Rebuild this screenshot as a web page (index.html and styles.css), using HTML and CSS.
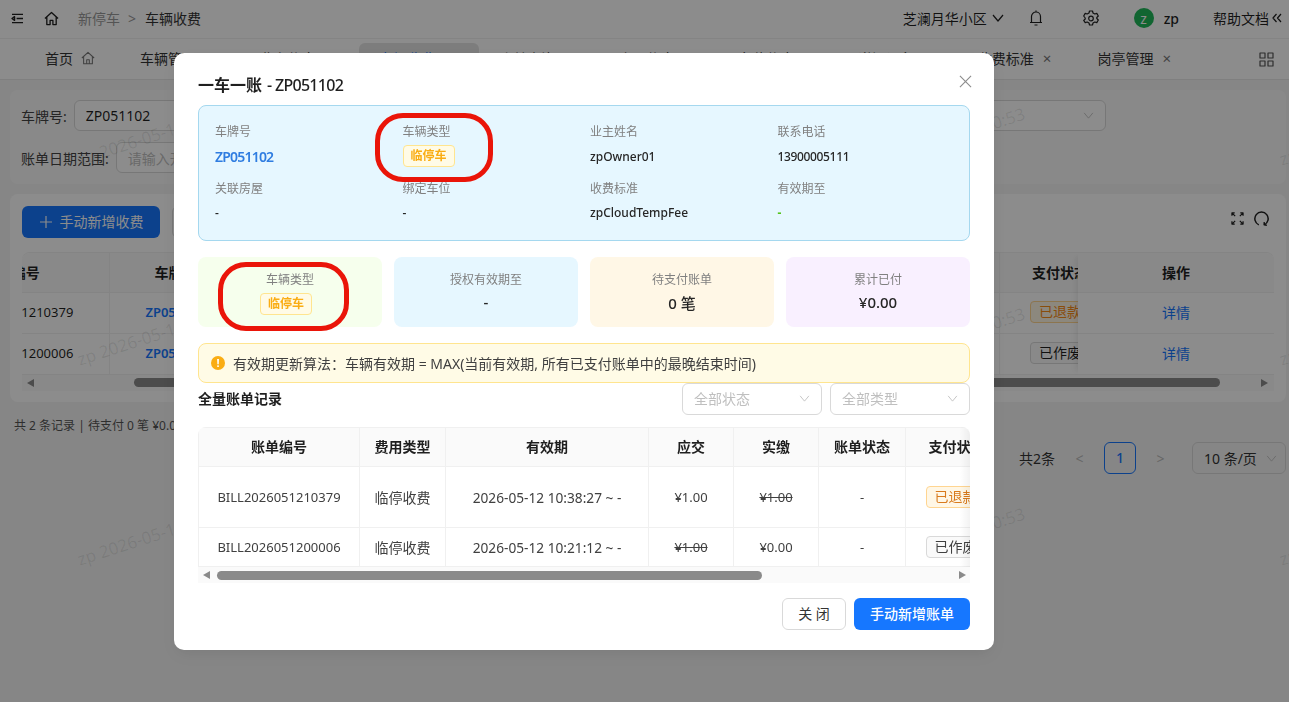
FILE: index.html
```html
<!DOCTYPE html>
<html lang="zh">
<head>
  <meta charset="utf-8">
  <title>车辆收费</title>
  <link rel="stylesheet" href="styles.css">
</head>
<body>
  <header class="topbar">
    <svg class="ico menu-ico" viewBox="0 0 14 12"><path d="M1 1.500h12M6 6h7M1 10.500h12M3.800 4 1 6l2.800 2z"/></svg>
    <svg class="ico home-ico" viewBox="0 0 16 16"><path d="M1 8 8 1.500 15 8M3 6.500V14.500h3.500V10h3v4.500H13V6.500"/></svg>
    <span class="crumb">新停车</span>
    <span class="crumb-sep">&gt;</span>
    <span class="crumb-now">车辆收费</span>
    <div class="topbar-right">
      <span class="community">芝澜月华小区</span>
      <svg class="ico chevron" viewBox="0 0 12 8"><path d="m1 1 5 6 5-6"/></svg>
      <svg class="ico bell" viewBox="0 0 14 16"><path d="M2.500 12.500V6.500a4.500 4.500 0 0 1 9 0v6M1 12.500h12M5.500 15h3M7 .5V2"/></svg>
      <svg class="ico gear" viewBox="0 0 16 16"><path d="M6.500 1h3l.5 2 1.800 1 2-.6 1.500 2.600-1.500 1.500v1l1.500 1.500-1.500 2.600-2-.6-1.800 1-.5 2h-3l-.5-2-1.800-1-2 .6L.700 10.500l1.500-1.500V8L.700 6l1.500-2.600 2 .6L6 3z"/><circle cx="8" cy="8.500" r="2.300"/></svg>
      <span class="avatar">z</span>
      <span class="user">zp</span>
      <span class="help">帮助文档</span>
      <svg class="ico collapse" viewBox="0 0 10 10"><path d="M4.500 1 1 5l3.500 4M9 1 5.500 5 9 9"/></svg>
    </div>
  </header>

  <nav class="tabs">
    <div class="tab tab-first">首页
      <svg class="ico tab-home" viewBox="0 0 16 16"><path d="M1 8 8 1.500 15 8M3 6.500V14.500h10V6.500M6.500 14.500V10h3v4.500"/></svg>
    </div>
    <div class="tab">车辆管理<span class="tab-x">×</span></div>
    <div class="tab">业主信息<span class="tab-x">×</span></div>
    <div class="tab tab-active">车辆收费<span class="tab-x">×</span></div>
    <div class="tab">账单查询<span class="tab-x">×</span></div>
    <div class="tab">房屋信息<span class="tab-x">×</span></div>
    <div class="tab">车位信息<span class="tab-x">×</span></div>
    <div class="tab">道闸设备<span class="tab-x">×</span></div>
    <div class="tab">收费标准<span class="tab-x">×</span></div>
    <div class="tab">岗亭管理<span class="tab-x">×</span></div>
    <svg class="ico tab-grid" viewBox="0 0 15 15"><path d="M1 1h5v5H1zM9 1h5v5H9zM1 9h5v5H1zM9 9h5v5H9z"/></svg>
  </nav>

  <main class="content">
    <section class="card search-card">
      <div class="search-row">
        <label class="search-label">车牌号:</label>
        <div class="input plate-input">ZP051102</div>
        <div class="input status-input">
          <span class="placeholder">全部状态</span>
          <svg class="ico chevron-sm" viewBox="0 0 12 8"><path d="m1 1 5 6 5-6"/></svg>
        </div>
      </div>
      <div class="search-row">
        <label class="search-label">账单日期范围:</label>
        <div class="input date-input"><span class="placeholder">请输入开始日期</span></div>
      </div>
    </section>

    <section class="card list-card">
      <div class="list-tools">
        <button class="btn-add">
          <svg class="plus" viewBox="0 0 12 12"><path d="M6 0v12M0 6h12"/></svg>手动新增收费
        </button>
        <button class="btn-export">导出</button>
        <svg class="ico tool-expand" viewBox="0 0 14 14"><path d="M1 4V1h3M1 1l3.500 3.500M13 4V1h-3M13 1 9.500 4.500M1 10v3h3M1 13l3.500-3.500M13 10v3h-3M13 13 9.500 9.500"/></svg>
        <svg class="ico tool-reload" viewBox="0 0 14 14"><path d="M4.500 12.900A6.200 6.200 0 1 1 9.500 12.900M9.600 10.400l-.1 2.500 2.500.4"/></svg>
      </div>
      <div class="list-wrap">
        <div class="list-scroll">
          <table class="list-table">
            <colgroup><col class="c-no"><col class="c-plate"><col class="c-rest"><col class="c-pay"></colgroup>
            <thead><tr><th>账单编号</th><th>车牌号</th><th>费用类型</th><th>支付状态</th></tr></thead>
            <tbody>
              <tr><td class="num">BILL2026051210379</td><td class="num plate-link">ZP051102</td><td>临停收费</td><td><span class="tag tag-refund">已退款</span></td></tr>
              <tr><td class="num">BILL2026051200006</td><td class="num plate-link">ZP051102</td><td>临停收费</td><td><span class="tag tag-void">已作废</span></td></tr>
            </tbody>
          </table>
        </div>
        <table class="list-table fixed-col">
          <thead><tr><th>操作</th></tr></thead>
          <tbody>
            <tr><td class="detail-link">详情</td></tr>
            <tr><td class="detail-link">详情</td></tr>
          </tbody>
        </table>
      </div>
      <div class="hscroll list-hscroll">
        <span class="arrow-left"></span>
        <span class="track"><span class="thumb"></span></span>
        <span class="arrow-right"></span>
      </div>
    </section>

    <div class="list-foot">
      <span class="foot-summary">共 2 条记录 | 待支付 0 笔 ¥0.00</span>
      <div class="pager">
        <span>共2条</span>
        <span class="pager-arrow">&lt;</span>
        <span class="pager-num">1</span>
        <span class="pager-arrow">&gt;</span>
        <span class="pager-size">10 条/页
          <svg class="ico chevron-sm" viewBox="0 0 12 8"><path d="m1 1 5 6 5-6"/></svg>
        </span>
      </div>
    </div>
  </main>

  <div class="watermarks">
    <span>zp 2026-05-12 10:20:53</span><span>zp 2026-05-12 10:20:53</span><span>zp 2026-05-12 10:20:53</span><span>zp 2026-05-12 10:20:53</span>
    <span>zp 2026-05-12 10:20:53</span><span>zp 2026-05-12 10:20:53</span><span>zp 2026-05-12 10:20:53</span><span>zp 2026-05-12 10:20:53</span>
    <span>zp 2026-05-12 10:20:53</span><span>zp 2026-05-12 10:20:53</span><span>zp 2026-05-12 10:20:53</span><span>zp 2026-05-12 10:20:53</span>
  </div>

  <div class="overlay">
    <div class="modal">
      <div class="modal-head">
        <h2 class="modal-title">一车一账<span class="modal-plate">- ZP051102</span></h2>
        <svg class="modal-close" viewBox="0 0 14 14"><path d="m1 1 12 12M13 1 1 13"/></svg>
      </div>

      <div class="info-box">
        <div class="info-item"><div class="info-label">车牌号</div><div class="info-value info-plate">ZP051102</div></div>
        <div class="info-item"><div class="info-label">车辆类型</div><div class="info-value"><span class="tag-temp">临停车</span></div></div>
        <div class="info-item"><div class="info-label">业主姓名</div><div class="info-value">zpOwner01</div></div>
        <div class="info-item"><div class="info-label">联系电话</div><div class="info-value info-phone">13900005111</div></div>
        <div class="info-item"><div class="info-label">关联房屋</div><div class="info-value">-</div></div>
        <div class="info-item"><div class="info-label">绑定车位</div><div class="info-value">-</div></div>
        <div class="info-item"><div class="info-label">收费标准</div><div class="info-value">zpCloudTempFee</div></div>
        <div class="info-item"><div class="info-label">有效期至</div><div class="info-value info-green">-</div></div>
      </div>

      <div class="stats">
        <div class="stat stat-green"><div class="stat-label">车辆类型</div><div class="stat-value"><span class="tag-temp stat-tag">临停车</span></div></div>
        <div class="stat stat-blue"><div class="stat-label">授权有效期至</div><div class="stat-value">-</div></div>
        <div class="stat stat-orange"><div class="stat-label">待支付账单</div><div class="stat-value">0 笔</div></div>
        <div class="stat stat-purple"><div class="stat-label">累计已付</div><div class="stat-value">¥0.00</div></div>
      </div>

      <div class="alert">
        <span class="alert-icon">!</span>
        有效期更新算法：车辆有效期 = MAX(当前有效期, 所有已支付账单中的最晚结束时间)
      </div>

      <div class="bill-head">
        <span class="bill-title">全量账单记录</span>
        <div class="bill-filters">
          <div class="filter"><span>全部状态</span><svg class="ico chevron-sm" viewBox="0 0 12 8"><path d="m1 1 5 6 5-6"/></svg></div>
          <div class="filter"><span>全部类型</span><svg class="ico chevron-sm" viewBox="0 0 12 8"><path d="m1 1 5 6 5-6"/></svg></div>
        </div>
      </div>

      <div class="bill-wrap">
        <table class="bill-table">
          <colgroup>
            <col class="b1"><col class="b2"><col class="b3"><col class="b4"><col class="b5"><col class="b6"><col class="b7">
          </colgroup>
          <thead>
            <tr><th>账单编号</th><th>费用类型</th><th>有效期</th><th>应交</th><th>实缴</th><th>账单状态</th><th>支付状态</th></tr>
          </thead>
          <tbody>
            <tr class="row-tall">
              <td>BILL2026051210379</td><td class="cn">临停收费</td><td class="date">2026-05-12 10:38:27 ~ -</td><td>¥1.00</td><td><s>¥1.00</s></td><td>-</td>
              <td><span class="bill-tag refund">已退款</span></td>
            </tr>
            <tr class="row-short">
              <td>BILL2026051200006</td><td class="cn">临停收费</td><td class="date">2026-05-12 10:21:12 ~ -</td><td><s>¥1.00</s></td><td>¥0.00</td><td>-</td>
              <td><span class="bill-tag void">已作废</span></td>
            </tr>
          </tbody>
        </table>
        <div class="hscroll bill-hscroll">
          <span class="arrow-left"></span>
          <span class="track"><span class="thumb"></span></span>
          <span class="arrow-right"></span>
        </div>
      </div>

      <div class="modal-foot">
        <button class="btn-close">关 闭</button>
        <button class="btn-primary">手动新增账单</button>
      </div>

      <span class="ring ring-info"></span>
      <span class="ring ring-stat"></span>
    </div>
  </div>
</body>
</html>
```

FILE: styles.css
```css
* {
  box-sizing: border-box;
}
html, body {
  height: 100%;
}
body {
  margin: 0;
  overflow: hidden;
  background: #f5f5f5;
  color: rgba(0, 0, 0, 0.88);
  font-family: "Noto Sans", "Noto Sans CJK SC", sans-serif;
  font-size: 14px;
}
.ico {
  flex: none;
  fill: none;
  stroke: currentColor;
  stroke-width: 1.2;
  stroke-linejoin: round;
}

/* top bar */
.topbar {
  display: flex;
  align-items: center;
  height: 39px;
  padding: 0 7px 2px 11px;
  background: #fff;
  border-bottom: 1px solid #f0f0f0;
}
.menu-ico {
  width: 13px;
  height: 11px;
  stroke-width: 1.500;
}
.home-ico {
  width: 15px;
  height: 15px;
  margin-left: 20px;
  stroke-width: 1.400;
}
.crumb {
  margin-left: 19px;
  color: #999;
}
.crumb-sep {
  margin: 0 9px 0 8px;
  color: #999;
}
.crumb-now {
  color: #333;
}
.topbar-right {
  display: flex;
  align-items: center;
  margin-left: auto;
}
.chevron {
  width: 12px;
  height: 8px;
  margin-left: 5px;
}
.bell {
  width: 14px;
  height: 16px;
  margin-left: 25px;
}
.gear {
  width: 16px;
  height: 16px;
  margin-left: 40px;
}
.avatar {
  width: 20px;
  height: 20px;
  margin-left: 35px;
  border-radius: 50%;
  background: #1fb85a;
  color: #fff;
  font-size: 14px;
  line-height: 22px;
  text-align: center;
}
.user {
  margin-left: 10px;
  font-weight: 500;
}
.help {
  margin-left: 34px;
}
.collapse {
  width: 10px;
  height: 10px;
  margin-left: 3px;
}

/* tabs */
.tabs {
  display: flex;
  align-items: center;
  height: 41px;
  padding: 0 15px 0 25px;
  background: #fff;
  border-bottom: 1px solid #e8e8e8;
}
.tab {
  display: flex;
  align-items: center;
  width: 119.700px;
  height: 37px;
  margin-top: 4px;
  padding: 0 0 7px 20px;
  color: #333;
}
.tab-first {
  width: 95px;
}
.tab-home {
  width: 14px;
  height: 14px;
  margin-left: 8px;
  color: #777;
}
.tab-active {
  border-radius: 6px 6px 0 0;
  background: #e4e4e4;
  color: #1677ff;
}
.tab-x {
  margin-left: 9px;
  color: #777;
  font-size: 15px;
}
.tab-grid {
  width: 15px;
  height: 15px;
  margin: 0 0 0 auto;
  color: #555;
}

/* page body */
.content {
  display: flex;
  flex-direction: column;
  padding: 10px 3px 0 10px;
}
.card {
  border-radius: 8px;
  background: #fff;
}
.search-card {
  height: 94px;
  padding: 10px 11px;
  background: #fafafa;
}
.search-row {
  display: flex;
  align-items: center;
  height: 31px;
  margin-bottom: 11px;
}
.search-label {
  color: #444;
}
.input {
  display: flex;
  align-items: center;
  height: 31px;
  padding: 0 11px;
  border: 1px solid #d9d9d9;
  border-radius: 6px;
  background: #fff;
}
.plate-input {
  width: 190px;
  margin-left: 7px;
}
.status-input {
  justify-content: space-between;
  width: 240px;
  margin-left: auto;
  margin-right: 169px;
}
.date-input {
  width: 200px;
  margin-left: 7px;
}
.placeholder {
  color: #bfbfbf;
}
.chevron-sm {
  width: 11px;
  height: 7px;
  color: #bfbfbf;
  stroke-width: 1;
}
.list-card {
  height: 208px;
  margin-top: 10px;
  padding: 12px;
}
.list-tools {
  display: flex;
  align-items: center;
  height: 32px;
  margin-bottom: 14px;
}
.btn-add {
  width: 138px;
  height: 32px;
  padding: 0 0 2px 1px;
  border: none;
  border-radius: 6px;
  background: #1677ff;
  color: #fff;
  font: inherit;
}
.plus {
  width: 12px;
  height: 12px;
  margin-right: 8px;
  fill: none;
  stroke: #fff;
  stroke-width: 1.200;
  vertical-align: -1px;
}
.btn-export {
  width: 70px;
  height: 32px;
  margin-left: 12px;
  border: 1px solid #d9d9d9;
  border-radius: 6px;
  background: #fff;
  font: inherit;
}
.tool-expand {
  width: 13px;
  height: 13px;
  margin: 0 0 8px auto;
  stroke-width: 1.300;
}
.tool-reload {
  width: 15px;
  height: 15px;
  margin: 0 5px 8px 10px;
  stroke-width: 1.400;
}
.list-wrap {
  display: flex;
  overflow: hidden;
  border-top: 1px solid #f0f0f0;
  border-radius: 8px 8px 0 0;
}
.list-scroll {
  flex: 1;
  overflow: hidden;
}
.list-table {
  width: 1206px;
  margin-left: -107px;
  border-collapse: collapse;
  table-layout: fixed;
}
.c-no { width: 194px; }
.c-plate { width: 133px; }
.c-rest { width: 757px; }
.c-pay { width: 122px; }
.list-table th {
  height: 39px;
  padding: 0 0 1px;
  background: #fafafa;
  border-right: 1px solid #f0f0f0;
  border-bottom: 1px solid #f0f0f0;
  font-weight: 600;
  white-space: nowrap;
}
.list-table td {
  height: 41px;
  padding: 0 0 1px;
  border-right: 1px solid #f0f0f0;
  border-bottom: 1px solid #f0f0f0;
  text-align: center;
  white-space: nowrap;
}
.list-table .num {
  font-size: 13px;
}
.plate-link {
  color: #1677ff;
  font-weight: 600;
}
.tag {
  display: inline-block;
  padding: 0 8px;
  border: 1px solid;
  border-radius: 4px;
  font-size: 14px;
  line-height: 20px;
}
.tag-refund {
  border-color: #ffd591;
  background: #fff7e6;
  color: #fa8c16;
}
.tag-void {
  border-color: #d9d9d9;
  background: #fafafa;
}
.fixed-col {
  flex: none;
  width: 196px;
  margin-left: 0;
  box-shadow: -6px 0 6px -4px rgba(0, 0, 0, 0.08);
}
.fixed-col th:last-child,
.fixed-col td:last-child {
  border-right: none;
  width: 196px;
}
.detail-link {
  color: #1677ff;
}

/* native looking horizontal scrollbars */
.hscroll {
  display: flex;
  align-items: center;
  height: 16px;
  background: #fafafa;
}
.arrow-left,
.arrow-right {
  flex: none;
  width: 0;
  height: 0;
  border-top: 4px solid transparent;
  border-bottom: 4px solid transparent;
}
.arrow-left {
  border-right: 7px solid #8a8a8a;
}
.arrow-right {
  border-left: 7px solid #8a8a8a;
}
.track {
  flex: 1;
  height: 9px;
}
.thumb {
  display: block;
  height: 9px;
  border-radius: 5px;
  background: #8a8a8a;
}
.list-hscroll {
  padding: 0 6px 0 5px;
}
.list-hscroll .track {
  margin: 0 6px;
}
.list-hscroll .thumb {
  width: 1086px;
  margin-left: 94px;
}
.list-foot {
  position: relative;
  height: 90px;
}
.foot-summary {
  display: block;
  margin: 14px 0 0 4px;
  color: #555;
  font-size: 12px;
}
.pager {
  display: flex;
  align-items: center;
  justify-content: flex-end;
  height: 32px;
  margin-top: 8px;
  color: #333;
}
.pager-arrow {
  width: 49px;
  color: #bbb;
  text-align: center;
}
.pager-num {
  width: 32px;
  height: 32px;
  border: 1px solid #1677ff;
  border-radius: 6px;
  color: #1677ff;
  font-weight: 500;
  line-height: 30px;
  text-align: center;
}
.pager-size {
  display: flex;
  align-items: center;
  justify-content: space-between;
  width: 94px;
  height: 32px;
  margin-left: 7px;
  padding: 0 8px 0 11px;
  border: 1px solid #d9d9d9;
  border-radius: 6px;
}

/* watermark tiles, drawn over the page */
.watermarks {
  position: absolute;
  inset: 0;
  overflow: hidden;
  display: grid;
  grid-template-columns: 386px 386px 430px 100px;
  grid-auto-rows: 200px;
  padding: 148px 0 0 78px;
  pointer-events: none;
}
.watermarks span {
  height: 24px;
  color: rgba(0, 0, 0, 0.09);
  font-size: 17px;
  line-height: 24px;
  white-space: nowrap;
  transform: rotate(-18deg);
  transform-origin: left center;
}
.watermarks span:nth-child(4n+3) {
  margin-top: 10px;
}

/* modal */
.overlay {
  position: fixed;
  inset: 0;
  padding: 53px 0 0 174px;
  background: rgba(0, 0, 0, 0.45);
}
.modal {
  position: relative;
  width: 820px;
  height: 597px;
  padding: 0 24px;
  border-radius: 10px;
  background: #fff;
  box-shadow: 0 6px 16px rgba(0, 0, 0, 0.08);
}
.modal-head {
  display: flex;
  align-items: center;
  justify-content: space-between;
  height: 52px;
  padding-top: 12px;
}
.modal-title {
  margin: 0;
  font-size: 16px;
  font-weight: 700;
  line-height: 24px;
}
.modal-plate {
  margin-left: 5px;
  font-weight: 500;
  letter-spacing: -0.700px;
}
.modal-close {
  width: 13px;
  height: 13px;
  margin: -8px -2px 0 0;
  fill: none;
  stroke: #8c8c8c;
  stroke-width: 1.200;
}
.info-box {
  display: grid;
  grid-template-columns: repeat(4, 1fr);
  column-gap: 12px;
  row-gap: 10px;
  height: 136px;
  padding: 15px 16px;
  border: 1px solid #a5d8ef;
  border-radius: 8px;
  background: #e6f7ff;
}
.info-label {
  height: 20px;
  color: #808080;
  font-size: 12px;
  line-height: 22px;
}
.info-value {
  display: flex;
  align-items: center;
  height: 22px;
  margin-top: 4px;
  color: #262626;
  font-size: 12px;
  font-weight: 500;
}
.info-item:nth-child(n+5) .info-label {
  line-height: 20px;
}
.info-item:nth-child(n+5) .info-value {
  margin-top: 3px;
}
.info-plate {
  color: #2f7de1;
  font-size: 14px;
  font-weight: 600;
  letter-spacing: -0.800px;
}
.info-phone {
  letter-spacing: -0.350px;
}
.info-box .info-green {
  color: #52c41a;
  font-weight: 700;
}
.tag-temp {
  display: inline-block;
  height: 22px;
  padding: 0 7px;
  border: 1px solid #ffe58f;
  border-radius: 4px;
  background: #fffbe6;
  color: #faad14;
  font-size: 12px;
  font-weight: 600;
  line-height: 20px;
}
.stat-tag {
  margin: 0 8px -4px 0;
}
.stats {
  display: grid;
  grid-template-columns: repeat(4, 1fr);
  gap: 12px;
  margin-top: 16px;
}
.stat {
  height: 70px;
  padding-top: 13px;
  border-radius: 8px;
  text-align: center;
}
.stat-green { background: #f6ffed; }
.stat-blue { background: #e6f7ff; }
.stat-orange { background: #fff7e6; }
.stat-purple { background: #f9f0ff; }
.stat-label {
  color: #808080;
  font-size: 12px;
  line-height: 20px;
}
.stat-value {
  display: flex;
  align-items: center;
  justify-content: center;
  height: 24px;
  margin-top: 2px;
  padding-bottom: 4px;
  color: #262626;
  font-size: 15px;
  font-weight: 500;
}
.alert {
  display: flex;
  align-items: center;
  height: 40px;
  margin-top: 16px;
  padding: 0 0 1px 12px;
  border: 1px solid #ffe58f;
  border-radius: 8px;
  background: #fffbe6;
  color: #404040;
}
.alert-icon {
  flex: none;
  width: 14px;
  height: 14px;
  margin-right: 8px;
  border-radius: 50%;
  background: #faad14;
  color: #fff;
  font-size: 11px;
  font-weight: 700;
  line-height: 14px;
  text-align: center;
}
.bill-head {
  display: flex;
  align-items: flex-start;
  justify-content: space-between;
  height: 44px;
}
.bill-title {
  margin-top: 5px;
  font-weight: 600;
  line-height: 22px;
}
.bill-filters {
  display: flex;
  gap: 8px;
}
.filter {
  display: flex;
  align-items: center;
  justify-content: space-between;
  width: 140px;
  height: 32px;
  padding: 0 11px 2px;
  border: 1px solid #d9d9d9;
  border-radius: 6px;
  color: #bfbfbf;
}
.bill-wrap {
  position: relative;
  overflow: hidden;
  border-radius: 8px 8px 0 0;
}
.bill-wrap::after {
  content: "";
  position: absolute;
  top: 0;
  right: 0;
  bottom: 16px;
  width: 10px;
  background: linear-gradient(to right, rgba(0, 0, 0, 0), rgba(0, 0, 0, 0.05));
}
.bill-table {
  width: 809px;
  border-collapse: collapse;
  table-layout: fixed;
}
.b1 { width: 161px; }
.b2 { width: 86px; }
.b3 { width: 203px; }
.b4 { width: 85px; }
.b5 { width: 85px; }
.b6 { width: 87px; }
.b7 { width: 102px; }
.bill-table th {
  height: 39px;
  padding: 0 0 3px;
  background: #fafafa;
  border: 1px solid #f0f0f0;
  border-left: none;
  font-weight: 600;
  white-space: nowrap;
}
.bill-table th:first-child,
.bill-table td:first-child {
  border-left: 1px solid #f0f0f0;
}
.bill-table td {
  padding: 0;
  border-right: 1px solid #f0f0f0;
  border-bottom: 1px solid #f0f0f0;
  color: #404040;
  font-size: 13px;
  text-align: center;
  white-space: nowrap;
}
.bill-table .cn {
  font-size: 14px;
}
.bill-table .date {
  font-size: 13.700px;
}
.row-tall td {
  height: 61px;
}
.row-short td {
  height: 39px;
}
.bill-tag {
  display: inline-block;
  height: 22px;
  margin-left: -2px;
  padding: 0 8px;
  border: 1px solid;
  border-radius: 4px;
  font-size: 14px;
  line-height: 20px;
}
.refund {
  border-color: #ffd591;
  background: #fff7e6;
  color: #d97a1c;
}
.void {
  border-color: #d9d9d9;
  background: #fafafa;
}
.bill-hscroll {
  padding: 0 4px 0 5px;
}
.bill-hscroll .track {
  margin: 0 7px;
}
.bill-hscroll .thumb {
  width: 545px;
}
.modal-foot {
  display: flex;
  justify-content: flex-end;
  gap: 8px;
  margin-top: 15px;
}
.btn-close,
.btn-primary {
  height: 32px;
  padding: 0 0 2px;
  border-radius: 6px;
  font: inherit;
}
.btn-close {
  width: 64px;
  border: 1px solid #d9d9d9;
  background: #fff;
  color: #333;
}
.btn-primary {
  width: 116px;
  border: none;
  background: #1677ff;
  color: #fff;
  font-weight: 500;
}

/* hand drawn red marks on top of the dialog */
.ring {
  position: absolute;
  height: 69px;
  border: 5px solid #ea1509;
  border-radius: 28px;
}
.ring-info {
  top: 60px;
  left: 201px;
  width: 118px;
}
.ring-stat {
  top: 209px;
  left: 44px;
  width: 131px;
}
```
